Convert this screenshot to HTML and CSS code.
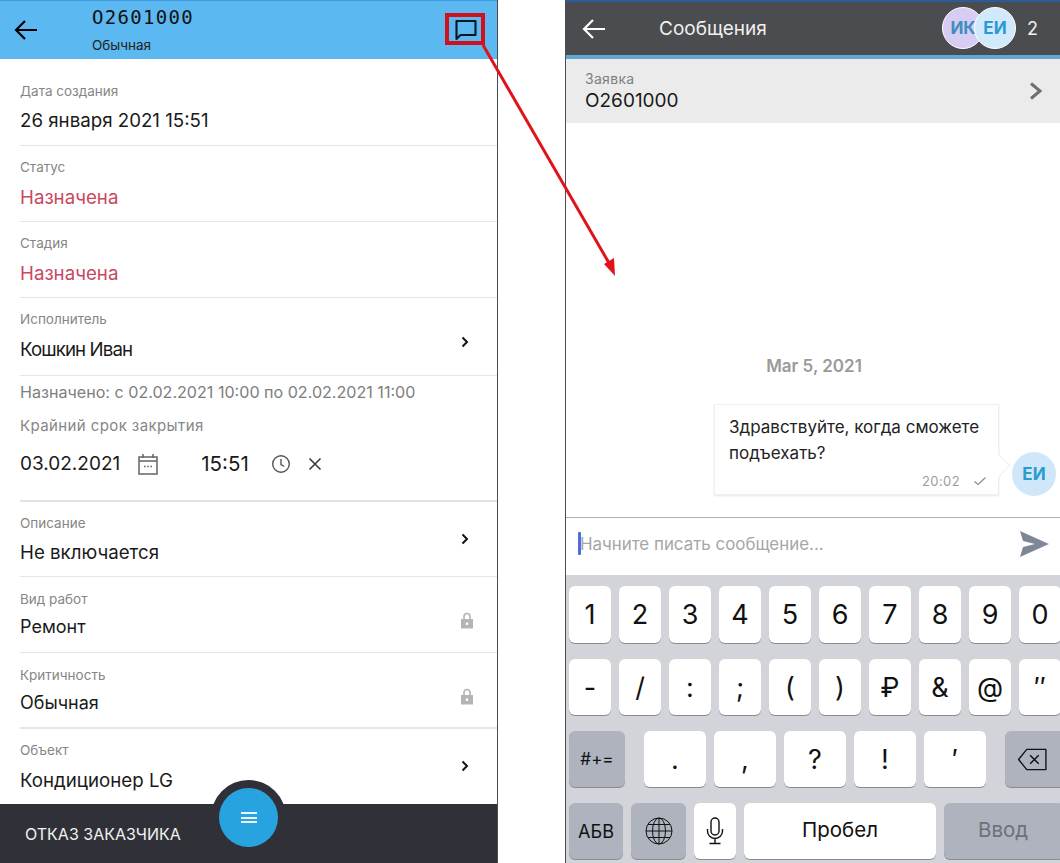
FILE: index.html
```html
<!DOCTYPE html>
<html lang="ru">
<head>
<meta charset="utf-8">
<title>Заявка</title>
<link rel="stylesheet" href="styles.css">
</head>
<body>
<div class="page">
  <section class="left">
    <header class="lhead">
      <svg class="lback" viewBox="0 0 24 24" width="24" height="24"><path d="M23 12H2M11 3l-9 9 9 9" fill="none" stroke="#000" stroke-width="2.200"/></svg>
      <div class="ltitle">
        <div class="lnum">O2601000</div>
        <div class="lsub">Обычная</div>
      </div>
      <svg class="lchat" viewBox="0 0 24 22" width="24" height="22"><path d="M2.500 2h19v14H6.500L2.500 20z" fill="none" stroke="#0c1620" stroke-width="2.100" stroke-linejoin="round"/></svg>
    </header>
    <div class="rows">
      <div class="row first"><div class="lab">Дата создания</div><div class="val">26 января 2021 15:51</div></div>
      <div class="row"><div class="lab">Статус</div><div class="val red">Назначена</div></div>
      <div class="row"><div class="lab">Стадия</div><div class="val red">Назначена</div></div>
      <div class="row link performer"><div class="lab">Исполнитель</div><div class="val tight">Кошкин Иван</div>
        <svg class="chev" viewBox="0 0 8 12" width="8" height="12"><path d="M1.500 1.500L6 6l-4.500 4.500" fill="none" stroke="#111" stroke-width="2"/></svg></div>
      <div class="deadline">
        <div class="assigned">Назначено: с 02.02.2021 10:00 по 02.02.2021 11:00</div>
        <div class="lab dl">Крайний срок закрытия</div>
        <div class="dline">
          <span class="val">03.02.2021</span>
          <svg class="ical" viewBox="0 0 20 22" width="20" height="22"><path d="M1 4h18v17H1zM1 8h18M5 1v4M15 1v4" fill="none" stroke="#666" stroke-width="1.500"/><path d="M6 13.500h1.600M9.200 13.500h1.600M12.400 13.500h1.600" stroke="#666" stroke-width="1.500"/></svg>
          <span class="val tm">15:51</span>
          <svg class="iclock" viewBox="0 0 20 20" width="20" height="20"><circle cx="10" cy="10" r="8.300" fill="none" stroke="#555" stroke-width="1.400"/><path d="M10 5v5.500l3.200 2" fill="none" stroke="#555" stroke-width="1.400"/></svg>
          <svg class="ix" viewBox="0 0 14 14" width="14" height="14"><path d="M1.500 1.500l11 11M12.500 1.500l-11 11" stroke="#333" stroke-width="1.500"/></svg>
        </div>
      </div>
      <div class="row link short"><div class="lab">Описание</div><div class="val">Не включается</div>
        <svg class="chev" viewBox="0 0 8 12" width="8" height="12"><path d="M1.500 1.500L6 6l-4.500 4.500" fill="none" stroke="#111" stroke-width="2"/></svg></div>
      <div class="row locked"><div class="lab">Вид работ</div><div class="val sm">Ремонт</div>
        <svg class="lock" viewBox="0 0 14 17" width="14" height="17"><path d="M4 7V4.500a3 3 0 0 1 6 0V7" fill="none" stroke="#b4b4b4" stroke-width="1.600"/><path d="M1 7h12v9.500H1z" fill="#b4b4b4"/><rect x="5.800" y="10.500" width="2.400" height="2.400" fill="#fff"/></svg></div>
      <div class="row locked thick"><div class="lab">Критичность</div><div class="val sm">Обычная</div>
        <svg class="lock" viewBox="0 0 14 17" width="14" height="17"><path d="M4 7V4.500a3 3 0 0 1 6 0V7" fill="none" stroke="#b4b4b4" stroke-width="1.600"/><path d="M1 7h12v9.500H1z" fill="#b4b4b4"/><rect x="5.800" y="10.500" width="2.400" height="2.400" fill="#fff"/></svg></div>
      <div class="row link last"><div class="lab">Объект</div><div class="val">Кондиционер LG</div>
        <svg class="chev" viewBox="0 0 8 12" width="8" height="12"><path d="M1.500 1.500L6 6l-4.500 4.500" fill="none" stroke="#111" stroke-width="2"/></svg></div>
    </div>
    <footer class="lfoot">
      <span class="reject">ОТКАЗ ЗАКАЗЧИКА</span>
      <div class="fabring"></div>
      <div class="fab"><span></span><span></span><span></span></div>
    </footer>
  </section>

  <section class="right">
    <header class="rhead">
      <svg class="rback" viewBox="0 0 24 24" width="24" height="24"><path d="M23 12H2M11 3l-9 9 9 9" fill="none" stroke="#fff" stroke-width="2.200"/></svg>
      <div class="rtitle">Сообщения</div>
      <div class="ava a1">ИК</div>
      <div class="ava a2">ЕИ</div>
      <div class="count">2</div>
    </header>
    <div class="ticket">
      <div>
        <div class="tlab">Заявка</div>
        <div class="tval">O2601000</div>
      </div>
      <svg viewBox="0 0 14 18" width="14" height="18"><path d="M2 1.500L11 9l-9 7.500" fill="none" stroke="#6e6e6e" stroke-width="3"/></svg>
    </div>
    <div class="chat">
      <div class="date">Mar 5, 2021</div>
      <div class="msgrow">
        <div class="bubble">
          <div class="mtext">Здравствуйте, когда сможете подъехать?</div>
          <div class="mmeta"><span>20:02</span><svg viewBox="0 0 14 10" width="14" height="10"><path d="M1.500 5.500L5 8.500l7.500-7" fill="none" stroke="#8a8a8a" stroke-width="1.100"/></svg></div>
        </div>
        <div class="ava a3">ЕИ</div>
      </div>
    </div>
    <div class="inputbar">
      <i class="caret"></i><span class="ph">Начните писать сообщение...</span>
      <svg viewBox="0 0 30 26" width="30" height="26"><path d="M1 0l29 13L1 26l3-10 12-3-12-3z" fill="#7d8797"/></svg>
    </div>
    <div class="kb">
      <div class="krow">
        <div class="key">1</div><div class="key">2</div><div class="key">3</div><div class="key">4</div><div class="key">5</div><div class="key">6</div><div class="key">7</div><div class="key">8</div><div class="key">9</div><div class="key">0</div>
      </div>
      <div class="krow">
        <div class="key">-</div><div class="key">/</div><div class="key">:</div><div class="key">;</div><div class="key">(</div><div class="key">)</div><div class="key">₽</div><div class="key">&amp;</div><div class="key">@</div><div class="key">″</div>
      </div>
      <div class="krow r3">
        <div class="key fn shift">#+=</div>
        <div class="key wide">.</div><div class="key wide">,</div><div class="key wide">?</div><div class="key wide">!</div><div class="key wide">′</div>
        <div class="key fn bksp"><svg viewBox="0 0 32 24" width="31" height="23"><path d="M30 1.500H10L1.500 12 10 22.500h20z" fill="none" stroke="#111" stroke-width="1.400" stroke-linejoin="round"/><path d="M13.500 7.500l9 9M22.500 7.500l-9 9" stroke="#111" stroke-width="1.500"/></svg></div>
      </div>
      <div class="krow r4">
        <div class="key fn abc">АБВ</div>
        <div class="key fn globe"><svg viewBox="0 0 28 28" width="28" height="28"><g fill="none" stroke="#111" stroke-width="1"><circle cx="14" cy="14" r="13"/><ellipse cx="14" cy="14" rx="6.500" ry="13"/><path d="M14 1v26M1 14h26M3 7.500h22M3 20.500h22"/></g></svg></div>
        <div class="key mic"><svg viewBox="0 0 18 28" width="18" height="28"><rect x="5" y="1" width="8" height="17" rx="4" fill="none" stroke="#111" stroke-width="1.400"/><path d="M1.500 12v2a7.500 7.500 0 0 0 15 0v-2M9 21.500V26M3.500 26.500h11" fill="none" stroke="#111" stroke-width="1.400"/></svg></div>
        <div class="key space">Пробел</div>
        <div class="key fn enter">Ввод</div>
      </div>
    </div>
  </section>

  <div class="hl"></div>
  <svg class="arrow" viewBox="0 0 1060 863" width="1060" height="863"><path d="M483 45L609 263" fill="none" stroke="#e0131b" stroke-width="3"/><path d="M615 276l-11-12 10-6z" fill="#e0131b"/></svg>
</div>
</body>
</html>
```
FILE: styles.css
```css
* { box-sizing: border-box; }
html, body { margin: 0; height: 100%; }
body { background: #fff; font-family: "Inter", "Noto Sans", "Liberation Sans", sans-serif; overflow: hidden; }
.page { position: relative; width: 1060px; height: 863px; display: flex; justify-content: space-between; overflow: hidden; }

/* left phone */
.left { width: 498px; height: 863px; border-right: 1px solid #4a4d52; display: flex; flex-direction: column; position: relative; }
.lhead { height: 59px; flex: none; background: #5cb8f0; border-top: 1px solid #3d9be0; display: flex; align-items: flex-start; position: relative; }
.lback { margin: 17px 0 0 14px; }
.ltitle { margin-left: 54px; }
.lnum { font-family: "DejaVu Sans Mono", monospace; font-size: 19px; line-height: 20px; margin-top: 6px; letter-spacing: 1.300px; color: #111; }
.lsub { font-size: 13.500px; line-height: 16px; margin-top: 10px; color: #222; }
.lchat { margin: 18px 19px 0 auto; }

.rows { flex: 1; min-height: 0; overflow: hidden; padding-left: 20px; }
.row { position: relative; height: 76px; border-bottom: 1px solid #e6e6e6; padding-top: 13px; }
.row.first { height: 87px; padding-top: 24px; }
.row.performer { height: 78px; }
.row.short { height: 75px; }
.lab { font-size: 13.500px; line-height: 16px; color: #868686; }
.val { font-size: 18.700px; line-height: 22px; color: #1a1a1a; margin-top: 12px; white-space: nowrap; }
.row.first .val, .row.short .val { margin-top: 11px; }
.val.sm { font-size: 18px; margin-top: 9px; }
.val.tight { letter-spacing: -.9px; }
.red { color: #c9485f; }
.row.locked { padding-top: 14px; }
.row.link .chev { position: absolute; right: 28px; top: 31px; }
.row.performer .chev { top: 38px; }
.row.locked .lock { position: absolute; right: 23px; top: 35px; }
.row.thick { border-bottom-width: 2px; }
.row.last { border-bottom: 0; }
.deadline { height: 126px; border-bottom: 2px solid #e4e4e4; padding-top: 6px; }
.assigned { font-size: 16.100px; line-height: 20px; color: #7e7e7e; white-space: nowrap; }
.lab.dl { font-size: 15px; letter-spacing: .4px; margin-top: 16px; }
.dline { display: flex; align-items: center; margin-top: 18px; height: 24px; }
.dline .val { margin: 0; font-size: 19px; }
.ical { margin-left: 18px; }
.dline .val.tm { margin-left: 43px; font-size: 20.500px; }
.iclock { margin-left: 22px; }
.ix { margin-left: 17px; }

.lfoot { height: 59px; flex: none; background: #303138; position: relative; display: flex; align-items: center; padding-left: 25px; }
.reject { font-size: 16px; color: #f2f2f2; }
.fabring { position: absolute; left: 211px; top: -24px; width: 75px; height: 75px; border-radius: 50%; background: #303138; }
.fab { position: absolute; left: 219px; top: -16px; width: 59px; height: 59px; border-radius: 50%; background: #27a4e0; display: flex; flex-direction: column; align-items: center; justify-content: center; gap: 2.500px; }
.fab span { display: block; width: 16px; height: 2px; background: #e8f5fc; }

/* right phone */
.right { width: 495px; height: 863px; border-left: 1px solid #4a4d52; display: flex; flex-direction: column; overflow: hidden; }
.rhead { height: 59px; flex: none; background: #4b4c4f; border-top: 2px solid #2a5d96; border-bottom: 4px solid #62a6d2; display: flex; align-items: center; position: relative; }
.rback { margin-left: 16px; }
.rtitle { margin-left: 53px; font-size: 19px; color: #f0f0f0; }
.ava { width: 44px; height: 44px; border-radius: 50%; display: flex; align-items: center; justify-content: center; font-weight: 700; font-size: 17px; flex: none; }
.a1 { position: absolute; left: 376px; top: 5px; width: 42px; height: 42px; background: #d6ccf4; color: #3d8fc0; border: 1px solid #fff; }
.a2 { position: absolute; left: 408px; top: 5px; width: 42px; height: 42px; background: #d0e9fb; color: #2a9ad0; border: 1px solid #fff; }
.count { position: absolute; left: 461px; top: 16px; font-size: 18px; color: #f0f0f0; }
.ticket { height: 64px; flex: none; background: #ebebeb; display: flex; align-items: center; justify-content: space-between; padding: 0 17px 0 19px; }
.tlab { font-size: 14px; line-height: 18px; color: #7f7f7f; letter-spacing: .3px; }
.tval { font-size: 19px; line-height: 23px; color: #1a1a1a; margin-top: 1px; }
.chat { height: 395px; flex: none; border-bottom: 1px solid #aeaeae; position: relative; display: flex; flex-direction: column; justify-content: flex-end; padding-bottom: 22px; }
.date { text-align: center; font-weight: 600; font-size: 17px; color: #9a9a9a; margin: 0 0 28px 2px; }
.msgrow { display: flex; align-items: flex-end; padding-left: 148px; }
.bubble { width: 285px; height: 91px; background: #fff; border: 1px solid #efefef; box-shadow: 0 1px 2px rgba(0,0,0,.1); position: relative; padding: 9px 14px 0; }
.bubble::after { content: ""; position: absolute; right: -9px; bottom: 20px; width: 16px; height: 16px; background: #fff; transform: rotate(45deg); border-top: 1px solid #efefef; border-right: 1px solid #efefef; }
.mtext { font-size: 17px; line-height: 26px; color: #222; }
.mmeta { position: absolute; right: 11px; bottom: 5px; display: flex; gap: 13px; align-items: center; font-size: 13px; color: #9d9d9d; letter-spacing: .03em; }
.a3 { margin: 0 0 -1px 13px; background: #cfe7f9; color: #2a9ad0; font-size: 17px; }
.inputbar { height: 57px; flex: none; display: flex; align-items: center; position: relative; padding: 0 0 6px 12px; }
.caret { width: 3px; height: 23px; background: #4a6fe0; border-radius: 1px; flex: none; }
.ph { font-size: 16.900px; color: #a6a6a6; margin-left: -1px; }
.inputbar svg { position: absolute; right: 11px; top: 13px; }
.kb { flex: 1; background: #d2d4da; padding: 11px 0 0 3px; display: flex; flex-direction: column; gap: 16px; }
.krow { display: flex; gap: 8px; height: 56px; flex: none; }
.krow:first-child { height: 57px; }
.key { width: 42px; height: 100%; flex: none; background: #fff; border-radius: 6px; box-shadow: 0 1px 0 #8a8b8f; display: flex; align-items: center; justify-content: center; font-size: 27px; color: #111; }
.fn { background: #aeb3be; }
.shift { width: 56px; font-size: 17px; margin-right: 11px; }
.wide { width: 62px; }
.bksp { width: 60px; margin-left: 11px; justify-content: flex-start; padding-left: 12px; }
.abc { width: 54px; font-size: 18px; }
.globe { width: 55px; }
.space { width: 192px; font-size: 20.500px; padding-bottom: 3px; }
.enter { width: 120px; font-size: 20.500px; color: #6d717a; justify-content: flex-start; padding: 0 0 3px 34px; }

/* annotation */
.hl { position: absolute; left: 445px; top: 13px; width: 40px; height: 32px; border: 4px solid #d0101c; }
.arrow { position: absolute; left: 0; top: 0; pointer-events: none; }
```
